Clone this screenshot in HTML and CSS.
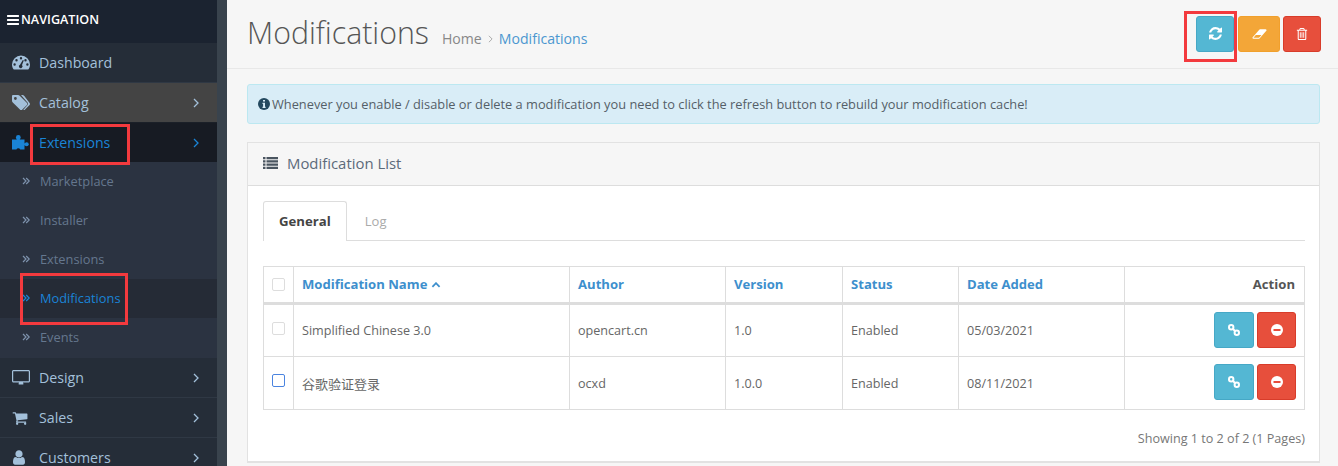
FILE: index.html
```html
<!DOCTYPE html>
<html lang="en">
<head>
<meta charset="utf-8">
<title>Modifications</title>
<link rel="stylesheet" href="styles.css">
</head>
<body>
<div class="app">
  <aside class="sidebar">
    <div class="nav-title">
      <svg class="i-bars" viewBox="0 0 1536 1536"><path fill="currentColor" d="M1536 1216v128q0 26-19 45t-45 19H64q-26 0-45-19t-19-45v-128q0-26 19-45t45-19h1408q26 0 45 19t19 45zm0-512v128q0 26-19 45t-45 19H64q-26 0-45-19t-19-45V704q0-26 19-45t45-19h1408q26 0 45 19t19 45zm0-512v128q0 26-19 45t-45 19H64q-26 0-45-19T0 320V192q0-26 19-45t45-19h1408q26 0 45 19t19 45z"/></svg>
      <span>NAVIGATION</span>
    </div>
    <ul class="menu">
      <li class="item">
        <svg class="icon" viewBox="0 0 18 14"><path fill="currentColor" fill-rule="evenodd" d="M9 0a9 9 0 0 1 9 9c0 1.900-.5 3.400-1.500 4.700-.2.200-.5.300-.8.300H2.300c-.3 0-.6-.1-.8-.3C.5 12.400 0 10.900 0 9a9 9 0 0 1 9-9zM9 1.600a1.200 1.200 0 1 0 0 2.400 1.200 1.200 0 0 0 0-2.400zM4.500 3.500a1.200 1.200 0 1 0 0 2.400 1.200 1.200 0 0 0 0-2.400zM13.500 3.500a1.200 1.200 0 1 0 0 2.400 1.200 1.200 0 0 0 0-2.400zM2.600 7.800a1.200 1.200 0 1 0 0 2.400 1.200 1.200 0 0 0 0-2.400zM15.400 7.800a1.200 1.200 0 1 0 0 2.400 1.200 1.200 0 0 0 0-2.400zM10.800 4.600 8 9.200a1.800 1.800 0 1 0 2 .4l1.800-4.600z"/></svg>
        <span class="label">Dashboard</span>
      </li>
      <li class="item item-hover">
        <svg class="icon" viewBox="0 0 18 15"><path fill="currentColor" fill-rule="evenodd" d="M1.200 0H6c.6 0 1.200.3 1.700.7l7.300 7.300c.6.600.6 1.400 0 2l-4.900 4.700c-.6.500-1.400.5-1.900 0L.8 7.400C.3 7 0 6.300 0 5.700V1.200C0 .5.500 0 1.200 0zM3.400 2.100a1.400 1.400 0 1 0 0 2.800 1.400 1.400 0 0 0 0-2.800z"/><path fill="currentColor" d="M9 0h1.400c.6 0 1.200.3 1.700.7l5.500 7.300c.5.600.5 1.400 0 2l-4.800 4.700c-.5.400-1.100.5-1.600.2l4.300-4.900c.7-.8.7-1.800 0-2.500z"/></svg>
        <span class="label">Catalog</span>
        <svg class="chev" viewBox="0 0 6 10"><path d="M1 1l4 4-4 4"/></svg>
      </li>
      <li class="item item-active">
        <svg class="icon" viewBox="0 0 18 15"><g fill="currentColor"><path d="M0 4.500h12.500v10h-4.300a2 1.800 0 0 0-3.800 0H0z"/><circle cx="6.300" cy="2.400" r="2.400"/><rect x="4.800" y="3" width="3" height="2"/><circle cx="14.700" cy="9.300" r="2"/><rect x="12" y="8.300" width="2" height="2"/></g></svg>
        <span class="label">Extensions</span>
        <svg class="chev" viewBox="0 0 6 10"><path d="M1 1l4 4-4 4"/></svg>
      </li>
      <li class="sub">
        <svg class="dbl" viewBox="0 0 8 8"><path d="M1 1l3 3-3 3M4.200 1l3 3-3 3"/></svg>
        <span>Marketplace</span>
      </li>
      <li class="sub">
        <svg class="dbl" viewBox="0 0 8 8"><path d="M1 1l3 3-3 3M4.200 1l3 3-3 3"/></svg>
        <span>Installer</span>
      </li>
      <li class="sub">
        <svg class="dbl" viewBox="0 0 8 8"><path d="M1 1l3 3-3 3M4.200 1l3 3-3 3"/></svg>
        <span>Extensions</span>
      </li>
      <li class="sub sub-active">
        <svg class="dbl" viewBox="0 0 8 8"><path d="M1 1l3 3-3 3M4.200 1l3 3-3 3"/></svg>
        <span>Modifications</span>
      </li>
      <li class="sub">
        <svg class="dbl" viewBox="0 0 8 8"><path d="M1 1l3 3-3 3M4.200 1l3 3-3 3"/></svg>
        <span>Events</span>
      </li>
      <li class="item">
        <svg class="icon" viewBox="0 0 18 15"><path fill="currentColor" fill-rule="evenodd" d="M1.500 0h15C17.300 0 18 .7 18 1.500v9.500c0 .8-.7 1.500-1.500 1.500H11c0 .6.500 1.100.5 1.600 0 .2-.2.400-.4.400H6.900c-.2 0-.4-.2-.4-.4 0-.5.500-1 .5-1.600H1.500C.7 12.500 0 11.800 0 11V1.500C0 .7.700 0 1.500 0zM1.500 1.200c-.2 0-.3.100-.3.300V11c0 .2.100.3.300.3h15c.2 0 .3-.1.300-.3V1.500c0-.2-.1-.3-.3-.3z"/></svg>
        <span class="label">Design</span>
        <svg class="chev" viewBox="0 0 6 10"><path d="M1 1l4 4-4 4"/></svg>
      </li>
      <li class="item">
        <svg class="icon icon-cart" viewBox="0 0 1792 1664"><path fill="currentColor" d="M704 1536q0 52-38 90t-90 38-90-38-38-90 38-90 90-38 90 38 38 90zm896 0q0 52-38 90t-90 38-90-38-38-90 38-90 90-38 90 38 38 90zm128-1088v512q0 24-16.500 42.500t-40.500 21.500l-1044 122q13 60 13 70 0 16-24 64h920q26 0 45 19t19 45-19 45-45 19h-1024q-26 0-45-19t-19-45q0-11 8-31.500t16-36 21.500-40 15.500-29.500l-177-823h-204q-26 0-45-19t-19-45 19-45 45-19h256q16 0 28.500 6.500t19.500 15.500 13 24.500 8 26 5.500 29.500 4.500 26h1201q26 0 45 19t19 45z"/></svg>
        <span class="label">Sales</span>
        <svg class="chev" viewBox="0 0 6 10"><path d="M1 1l4 4-4 4"/></svg>
      </li>
      <li class="item">
        <svg class="icon icon-user" viewBox="0 0 1280 1536"><path fill="currentColor" d="M1280 1271q0 109-62.500 187t-150.500 78H213q-88 0-150.500-78T0 1271q0-85 8.500-160.500t31.500-152 58.500-131 94-89T327 704q131 128 313 128t313-128q76 0 134.500 34.500t94 89 58.500 131 31.500 152 8.500 160.500zM1024 384q0 159-112.500 271.500T640 768 368.500 655.500 256 384t112.500-271.500T640 0t271.500 112.500T1024 384z"/></svg>
        <span class="label">Customers</span>
        <svg class="chev" viewBox="0 0 6 10"><path d="M1 1l4 4-4 4"/></svg>
      </li>
    </ul>
  </aside>

  <main class="content">
    <header class="page-header">
      <h1>Modifications</h1>
      <nav class="crumbs">
        <span class="crumb-home">Home</span>
        <svg class="crumb-sep" viewBox="0 0 6 10"><path d="M1 1l4 4-4 4"/></svg>
        <span class="link">Modifications</span>
      </nav>
      <div class="toolbar">
        <button class="btn btn-info btn-refresh" type="button">
          <svg class="btn-ic-lg" viewBox="0 0 1536 1536"><path fill="currentColor" d="M1511 928q0 5-1 7-64 268-268 434.500T764 1536q-146 0-282.500-55T238 1324l-129 129q-19 19-45 19t-45-19-19-45V960q0-26 19-45t45-19h448q26 0 45 19t19 45-19 45l-137 137q71 66 161 102t187 36q134 0 250-65t186-179q11-17 53-117 8-23 30-23h192q13 0 22.500 9.500t9.500 22.500zm25-800v448q0 26-19 45t-45 19h-448q-26 0-45-19t-19-45 19-45l138-138q-148-137-349-137-134 0-250 65T332 500q-11 17-53 117-8 23-30 23H50q-13 0-22.500-9.500T18 608v-7q65-268 270-434.500T768 0q146 0 284 55.500T1297 212l130-129q19-19 45-19t45 19 19 45z"/></svg>
        </button>
        <button class="btn btn-warning btn-eraser" type="button">
          <svg class="btn-ic-wide" viewBox="0 256 2048 1280"><path fill="currentColor" d="M960 1408l336-384H528l-336 384h768zm1013-1077q15 34 9.500 71.500t-30.500 65.500l-896 1024q-38 44-96 44H192q-38 0-69.500-20.500T75 1461q-15-34-9.500-71.500T96 1324l896-1024q38-44 96-44h768q38 0 70 20.500t47 54.500z"/></svg>
        </button>
        <button class="btn btn-danger btn-trash" type="button">
          <svg class="btn-ic" viewBox="0 0 12 14"><path fill="currentColor" fill-rule="evenodd" d="M4.200 0h3.600c.4 0 .7.200.9.600L9.300 2H12v1.200h-1V12.500c0 .8-.6 1.500-1.300 1.500H2.300C1.600 14 1 13.300 1 12.500V3.200H0V2h2.700L3.300.6C3.500.2 3.800 0 4.200 0zM4.300 1.200 4 2h4l-.3-.8zM2.200 3.200V12.500c0 .2.100.3.100.3h7.400s.1-.1.100-.3V3.200zM3.500 5h1v6.500h-1zM5.500 5h1v6.500h-1zM7.500 5h1v6.500h-1z"/></svg>
        </button>
      </div>
    </header>

    <div class="body">
      <div class="alert">
        <svg class="alert-ic" viewBox="0 0 12 12"><circle cx="6" cy="6" r="6" fill="currentColor"/><path fill="#d9edf7" d="M5 2h2v1.600H5zM4.500 4.800H7v3.900h.6V10H4.500V8.700h.6V6.100h-.6z"/></svg>
        <span>Whenever you enable / disable or delete a modification you need to click the refresh button to rebuild your modification cache!</span>
      </div>

      <section class="panel">
        <div class="panel-heading">
          <svg class="list-ic" viewBox="0 0 15 12"><path fill="currentColor" d="M0 0h2.500v2.200H0zM3.500 0H15v2.200H3.500zM0 3.200h2.500v2.200H0zM3.500 3.200H15v2.200H3.500zM0 6.500h2.500v2.200H0zM3.500 6.500H15v2.200H3.500zM0 9.700h2.500V12H0zM3.500 9.700H15V12H3.500z"/></svg>
          <span>Modification List</span>
        </div>
        <div class="panel-body">
          <div class="tabs">
            <div class="tab tab-active">General</div>
            <div class="tab">Log</div>
          </div>
          <table class="table">
            <colgroup>
              <col class="c1"><col class="c2"><col class="c3"><col class="c4"><col class="c5"><col class="c6"><col class="c7">
            </colgroup>
            <thead>
              <tr>
                <th class="center"><span class="check check-head"></span></th>
                <th><span class="link">Modification Name</span> <svg class="caret" viewBox="0 0 8 5"><path d="M1 4l3-3 3 3"/></svg></th>
                <th><span class="link">Author</span></th>
                <th><span class="link">Version</span></th>
                <th><span class="link">Status</span></th>
                <th><span class="link">Date Added</span></th>
                <th class="right">Action</th>
              </tr>
            </thead>
            <tbody>
              <tr>
                <td class="center"><span class="check"></span></td>
                <td>Simplified Chinese 3.0</td>
                <td>opencart.cn</td>
                <td>1.0</td>
                <td>Enabled</td>
                <td>05/03/2021</td>
                <td class="right actions">
                  <button class="btn btn-info btn-sm" type="button"><svg class="link-ic" viewBox="0 0 12 12"><g fill="none" stroke="currentColor" stroke-width="2"><circle cx="3.200" cy="3.200" r="2.200"/><circle cx="8.800" cy="8.800" r="2.200"/><path d="M4.500 4.500l3 3"/></g></svg></button>
                  <button class="btn btn-danger btn-sm2" type="button"><svg class="minus-ic" viewBox="0 0 12 12"><circle cx="6" cy="6" r="6" fill="currentColor"/><rect x="2.500" y="5" width="7" height="2" fill="#e74c3c"/></svg></button>
                </td>
              </tr>
              <tr>
                <td class="center"><span class="check check-blue"></span></td>
                <td class="cjk">谷歌验证登录</td>
                <td>ocxd</td>
                <td>1.0.0</td>
                <td>Enabled</td>
                <td>08/11/2021</td>
                <td class="right actions">
                  <button class="btn btn-info btn-sm" type="button"><svg class="link-ic" viewBox="0 0 12 12"><g fill="none" stroke="currentColor" stroke-width="2"><circle cx="3.200" cy="3.200" r="2.200"/><circle cx="8.800" cy="8.800" r="2.200"/><path d="M4.500 4.500l3 3"/></g></svg></button>
                  <button class="btn btn-danger btn-sm2" type="button"><svg class="minus-ic" viewBox="0 0 12 12"><circle cx="6" cy="6" r="6" fill="currentColor"/><rect x="2.500" y="5" width="7" height="2" fill="#e74c3c"/></svg></button>
                </td>
              </tr>
            </tbody>
          </table>
          <div class="showing">Showing 1 to 2 of 2 (1 Pages)</div>
        </div>
      </section>
    </div>
  </main>
</div>
<div class="mark mark-ext"></div>
<div class="mark mark-mod"></div>
<div class="mark mark-refresh"></div>
</body>
</html>
```

FILE: styles.css
```css
* { box-sizing: border-box; }
html, body { margin: 0; height: 466px; overflow: hidden; }
body { font-family: "Open Sans", "Noto Sans CJK SC", sans-serif; font-size: 12px; color: #666; background: #f6f6f6; position: relative; }
.app { display: flex; height: 466px; }

.sidebar { flex: 0 0 227px; background: #2b3341; border-right: 10px solid #39434d; overflow: hidden; }
.nav-title { height: 43px; background: #1b2330; color: #fff; font-size: 12.600px; font-weight: 600; display: flex; align-items: center; padding: 0 0 4px 7px; gap: 2px; }
.i-bars { width: 12px; height: 12px; }
.menu { list-style: none; margin: 0; padding: 0; }
.item { height: 40px; display: flex; align-items: center; background: #252d38; color: #a3c0da; font-size: 14.200px; border-bottom: 1px solid #2f3844; position: relative; }
.item-hover { background: #444; height: 40px; border-bottom-color: #1b2028; }
.item-active { background: #171b23; color: #1a84d6; border-bottom: 0; height: 39px; }
.icon { width: 18px; height: 15px; margin-left: 12px; flex: none; }
.icon-cart { width: 16px; height: 15px; margin-right: 2px; }
.icon-user { width: 12px; height: 15px; margin-left: 13px; margin-right: 5px; }
.label { margin-left: 9px; flex: 1; }
.chev { width: 6px; height: 10px; margin-right: 18px; fill: none; stroke: currentColor; stroke-width: 1.300; }
.sub { height: 39px; display: flex; align-items: center; padding: 0 0 2px 22px; background: #2b3341; color: #65778e; font-size: 12.800px; gap: 10px; }
.sub:nth-child(8) { height: 40px; }
.sub-active { background: #252b36; color: #1a84d6; }
.dbl { width: 8px; height: 8px; fill: none; stroke: #7e93ad; stroke-width: 1.200; flex: none; }
.sub-active .dbl { stroke: #1a84d6; }

.content { flex: 1; min-width: 0; }
.page-header { height: 69px; border-bottom: 1px solid #e8e8e8; display: flex; align-items: center; padding: 0 17px 0 20px; }
h1 { margin: 0 0 1px; font-size: 30.300px; font-weight: 300; color: #555; line-height: 1; }
.crumbs { display: flex; align-items: center; margin: 9px 0 0 13px; font-size: 14.100px; color: #888; gap: 6px; }
.crumb-sep { width: 5px; height: 8px; fill: none; stroke: #999; stroke-width: 1; }
.link { color: #3d8fcd; }
.crumbs .link { color: #4b96d0; }
.toolbar { margin: 0 0 0 auto; display: flex; gap: 3px; padding-bottom: 1px; }

.btn { border: 1px solid; border-radius: 3px; padding: 0; color: #fff; display: inline-flex; align-items: center; justify-content: center; vertical-align: middle; }
.btn-info { background: #54b7d3; border-color: #46a8c6; }
.btn-warning { background: #f3a638; border-color: #f1a02c; }
.btn-danger { background: #e74f3c; border-color: #d83c2a; }
.btn-refresh { width: 38px; height: 36px; margin-right: 1px; }
.btn-eraser { width: 42px; height: 36px; }
.btn-trash { width: 38px; height: 36px; }
.btn-ic { width: 12px; height: 12px; }
.btn-ic-lg { width: 13px; height: 13px; }
.btn-ic-wide { width: 15px; height: 10px; }

.body { padding: 15px 18px 0 20px; }
.alert { height: 40px; background: #d9edf7; border: 1px solid #bce8f1; border-radius: 3px; display: flex; align-items: center; padding-left: 10px; font-size: 12.800px; color: #555f68; gap: 2px; }
.alert-ic { width: 12px; height: 12px; color: #24495f; flex: none; }

.panel { margin-top: 18px; background: #fff; border: 1px solid #e2e2e2; border-bottom-width: 2px; height: 321px; }
.panel-heading { height: 43px; background: #f6f6f6; border-bottom: 1px solid #ddd; display: flex; align-items: center; padding: 0 0 2px 15px; font-size: 14.900px; color: #5c6a7a; gap: 9px; }
.list-ic { width: 15px; height: 12px; color: #4a5560; }
.panel-body { padding: 15px 14px 0 15px; }
.tabs { display: flex; border-bottom: 1px solid #ddd; height: 40px; }
.tab { padding: 0 18px; line-height: 40px; font-size: 13px; color: #aaa; }
.tab-active { height: 40px; background: #fff; color: #444; font-weight: 700; font-size: 13.200px; padding: 0 15px; border: 1px solid #ddd; border-bottom: 0; border-radius: 3px 3px 0 0; line-height: 39px; }

.table { width: 1041px; margin-top: 25px; border-collapse: collapse; table-layout: fixed; }
.c1 { width: 30px; } .c2 { width: 276px; } .c3 { width: 156px; } .c4 { width: 117px; } .c5 { width: 116px; } .c6 { width: 166px; } .c7 { width: 180px; }
th, td { border: 1px solid #ddd; padding: 0 0 0 8px; text-align: left; }
th { height: 37px; border-bottom: 3px solid #ddd; padding-bottom: 2px; font-size: 13.100px; font-weight: 700; color: #555; }
td { height: 53px; font-size: 12.600px; color: #666; }
.center { padding: 0; text-align: center; }
.right { text-align: right; padding: 0 9px 0 0; }
th.right { padding: 0 9px 2px 0; }
th .link { color: #3d8fcd; }
.caret { width: 10px; height: 6px; fill: none; stroke: #3d8fcd; stroke-width: 1.500; vertical-align: 1px; }
.check { display: inline-block; width: 13px; height: 13px; border: 1px solid #ddd; border-radius: 2px; background: #fff; vertical-align: middle; margin-bottom: 5px; }
.check-head { margin-bottom: 3px; }
.check-blue { border-color: #4a84e0; }
.cjk { font-family: "Noto Sans CJK SC", sans-serif; font-size: 13px; }
.actions { font-size: 0; padding: 0 8px 2px 0; }
.btn-sm { width: 40px; height: 36px; margin-right: 3px; }
.btn-sm2 { width: 39px; height: 36px; }
.link-ic { width: 12px; height: 12px; }
.minus-ic { width: 12px; height: 12px; }
.showing { margin-top: 20px; text-align: right; font-size: 12.600px; color: #777; }

.mark { position: absolute; border: 3px solid #f33a3e; pointer-events: none; }
.mark-ext { left: 30px; top: 124px; width: 100px; height: 41px; }
.mark-mod { left: 20px; top: 273px; width: 108px; height: 52px; }
.mark-refresh { left: 1184px; top: 11px; width: 53px; height: 51px; }
```
